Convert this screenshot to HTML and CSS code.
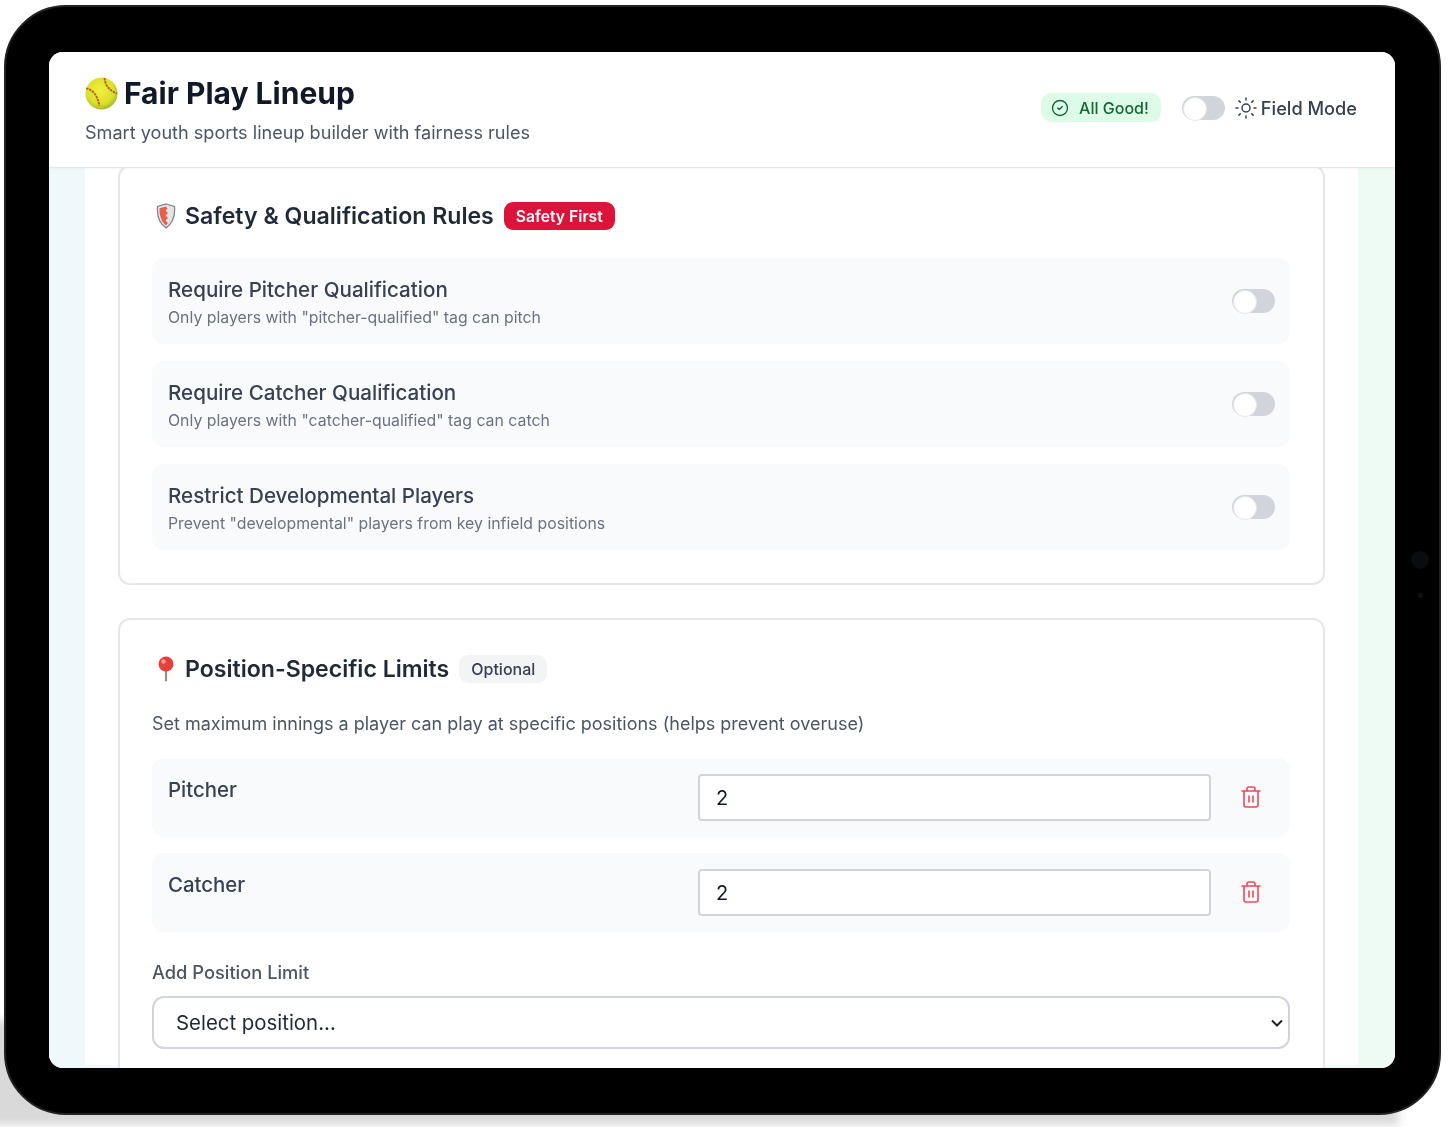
FILE: index.html

```html
<!DOCTYPE html>
<html>
<head>
  <meta charset="UTF-8">
  <title>Fair Play Lineup</title>
  <link rel="stylesheet" href="styles.css">
</head>
<body>
  <div class="ground-shadow"></div>
  <div class="device">
    <div class="camera"></div>
    <div class="sensor"></div>
    <div class="screen">
      <div class="header">
        <div>
          <h1 class="app-title">
            <svg class="ball" viewBox="0 0 32 32">
              <defs>
                <radialGradient id="ballFill" cx="45%" cy="40%" r="62%">
                  <stop offset="0" stop-color="#f2f03c"/>
                  <stop offset="0.7" stop-color="#d9e02a"/>
                  <stop offset="1" stop-color="#9fb52a"/>
                </radialGradient>
              </defs>
              <circle cx="16" cy="16" r="15.5" fill="url(#ballFill)"/>
              <path d="M1 11c6 1 11 6 13 17M19 1c0 6 4 12 12 15" fill="none" stroke="#bb5a2c" stroke-width="1.8" stroke-dasharray="2.4 .8"/>
            </svg>
            Fair Play Lineup
          </h1>
          <p class="app-sub">Smart youth sports lineup builder with fairness rules</p>
        </div>
        <div class="header-right">
          <span class="status">
            <svg class="status-icon" viewBox="0 0 24 24"><circle cx="12" cy="12" r="10"/><path d="m9 12 2 2 4-4"/></svg>
            All Good!
          </span>
          <span class="toggle"></span>
          <span class="field-mode">
            <svg class="sun" viewBox="0 0 24 24"><circle cx="12" cy="12" r="4"/><path d="M12 2v2M12 20v2M4.9 4.900l1.400 1.400M17.700 17.700l1.400 1.400M2 12h2M20 12h2M6.300 17.700l-1.400 1.400M19.100 4.900l-1.400 1.400"/></svg>
            Field Mode
          </span>
        </div>
      </div>

      <div class="page">
        <div class="column">
          <div class="card">
            <div class="card-title">
              <svg class="emoji" viewBox="0 0 20 26">
                <path d="M10 1 18.500 3.500c.8 9-1.500 16.500-8.500 21.500C3 20 .7 12.500 1.500 3.500z" fill="#e3e4e7" stroke="#7e8288" stroke-width="1.200"/>
                <path d="M10 3.500 3.500 5.200C3.200 12 5 18 10 22.500l2-2.500-2.500-2.500 2.500-2.500-2.500-2.500 2.500-2.500-2.500-2.500 2-2z" fill="#e8604a"/>
              </svg>
              <h2>Safety &amp; Qualification Rules</h2>
              <span class="badge badge-red">Safety First</span>
            </div>
            <div class="rule">
              <div>
                <div class="rule-name">Require Pitcher Qualification</div>
                <div class="rule-desc">Only players with "pitcher-qualified" tag can pitch</div>
              </div>
              <span class="toggle"></span>
            </div>
            <div class="rule">
              <div>
                <div class="rule-name">Require Catcher Qualification</div>
                <div class="rule-desc">Only players with "catcher-qualified" tag can catch</div>
              </div>
              <span class="toggle"></span>
            </div>
            <div class="rule">
              <div>
                <div class="rule-name">Restrict Developmental Players</div>
                <div class="rule-desc">Prevent "developmental" players from key infield positions</div>
              </div>
              <span class="toggle"></span>
            </div>
          </div>

          <div class="card card-limits">
            <div class="card-title">
              <svg class="emoji" viewBox="0 0 20 26">
                <path d="M10 13v11.500" stroke="#9a8f84" stroke-width="2.200" stroke-linecap="round"/>
                <circle cx="10" cy="8" r="7.500" fill="#e5403a"/>
                <circle cx="7.500" cy="5.500" r="2.200" fill="#f59a90"/>
              </svg>
              <h2>Position-Specific Limits</h2>
              <span class="badge badge-gray">Optional</span>
            </div>
            <p class="limits-help">Set maximum innings a player can play at specific positions (helps prevent overuse)</p>
            <div class="limit">
              <div class="limit-name">Pitcher</div>
              <input class="limit-input" type="text" value="2">
              <svg class="trash" viewBox="0 0 24 24"><path d="M3 6h18M19 6v14a2 2 0 0 1-2 2H7a2 2 0 0 1-2-2V6M8 6V4a2 2 0 0 1 2-2h4a2 2 0 0 1 2 2v2M10 11v6M14 11v6"/></svg>
            </div>
            <div class="limit">
              <div class="limit-name">Catcher</div>
              <input class="limit-input" type="text" value="2">
              <svg class="trash" viewBox="0 0 24 24"><path d="M3 6h18M19 6v14a2 2 0 0 1-2 2H7a2 2 0 0 1-2-2V6M8 6V4a2 2 0 0 1 2-2h4a2 2 0 0 1 2 2v2M10 11v6M14 11v6"/></svg>
            </div>
            <label class="add-label" for="addLimit">Add Position Limit</label>
            <select class="add-select" id="addLimit">
              <option>Select position...</option>
            </select>
          </div>
        </div>
      </div>
    </div>
  </div>
</body>
</html>
```

FILE: styles.css

```css
* {
    box-sizing: border-box;
}
html, body {
    height: 100%;
}
body {
    margin: 0;
    background: #fff;
    font-family: Inter, "Liberation Sans", sans-serif;
    overflow: hidden;
    position: relative;
}
.ground-shadow {
    position: absolute;
    left: -10px;
    right: 50px;
    bottom: 2px;
    height: 105px;
    background: #d9d9d9;
    filter: blur(4px);
}
.device {
    position: relative;
    width: 1437px;
    height: 1110px;
    margin: 5px 0 0 4px;
    padding: 45px 44px 0 43px;
    background: #000;
    border: 2px solid #222;
    border-radius: 62px;
    filter: blur(0.5px);
}
.camera {
    position: absolute;
    right: 10px;
    top: 544px;
    width: 18px;
    height: 18px;
    border-radius: 50%;
    background: #0b0c10;
}
.sensor {
    position: absolute;
    right: 16px;
    top: 586px;
    width: 5px;
    height: 5px;
    border-radius: 50%;
    background: #111;
}
.screen {
    height: 1016px;
    border-radius: 14px;
    overflow: hidden;
    background: #fff;
    display: flex;
    flex-direction: column;
}

/* header */
.header {
    flex: none;
    height: 116px;
    padding: 0 38px 0 36px;
    display: flex;
    align-items: center;
    justify-content: space-between;
    background: #fff;
    border-bottom: 1px solid #e5e7eb;
    box-shadow: 0 1px 2px rgba(0,0,0,0.04);
    position: relative;
    z-index: 2;
}
.app-title {
    margin: 0;
    display: flex;
    align-items: center;
    gap: 6px;
    font-size: 30px;
    line-height: 36px;
    font-weight: 700;
    color: #111827;
}
.ball {
    width: 33px;
    height: 33px;
}
.app-sub {
    margin: 9px 0 0;
    font-size: 18.100px;
    line-height: 24px;
    color: #4b5563;
}
.header-right {
    display: flex;
    align-items: center;
    margin-bottom: 4px;
}
.status {
    display: flex;
    align-items: center;
    gap: 10px;
    height: 29px;
    padding: 0 12px 0 10px;
    margin-right: 21px;
    border-radius: 10px;
    background: #dcfce7;
    color: #166534;
    font-size: 16px;
    font-weight: 500;
}
.status-icon {
    width: 18px;
    height: 18px;
    fill: none;
    stroke: #166534;
    stroke-width: 1.800;
    stroke-linecap: round;
    stroke-linejoin: round;
}
.toggle {
    flex: none;
    display: block;
    width: 43px;
    height: 24px;
    border-radius: 12px;
    background: #d1d5db;
    position: relative;
}
.toggle::after {
    content: "";
    position: absolute;
    left: 1px;
    top: 1px;
    width: 22px;
    height: 22px;
    border-radius: 50%;
    background: #fff;
    border: 1px solid #e5e7eb;
}
.field-mode {
    display: flex;
    align-items: center;
    gap: 3px;
    margin-left: 9px;
    font-size: 18.200px;
    font-weight: 500;
    color: #374151;
}
.sun {
    width: 24px;
    height: 24px;
    fill: none;
    stroke: #374151;
    stroke-width: 1.500;
    stroke-linecap: round;
}

/* page */
.page {
    flex: 1;
    min-height: 0;
    overflow: hidden;
    padding: 0 37px 0 36px;
    background: linear-gradient(90deg, #eff8fb 0%, #eefbf5 100%);
}
.column {
    height: 100%;
    padding: 0 33px;
    background: #fff;
}
.card {
    margin-top: -3px;
    padding: 32px 33px 33px 32px;
    background: #fff;
    border: 2px solid #e5e7eb;
    border-radius: 12px;
}
.card-limits {
    margin-top: 33px;
}
.card-title {
    display: flex;
    align-items: center;
    height: 34px;
    margin-bottom: 25px;
}
.emoji {
    width: 20px;
    height: 26px;
    margin: 0 9px 0 4px;
}
.card-title h2 {
    margin: 0;
    font-size: 23.100px;
    font-weight: 600;
    color: #1f2937;
}
.badge {
    margin-left: 10px;
    height: 28px;
    padding: 0 12px;
    border-radius: 9px;
    display: flex;
    align-items: center;
    font-size: 16px;
}
.badge-red {
    background: #dc143c;
    color: #fff;
    font-size: 15.700px;
    font-weight: 600;
}
.badge-gray {
    background: #f3f4f6;
    color: #374151;
    font-weight: 500;
}
.rule {
    height: 86px;
    margin-top: 17px;
    padding: 0 15px 0 16px;
    display: flex;
    align-items: center;
    justify-content: space-between;
    background: #f9fafb;
    border-radius: 12px;
}
.rule:first-of-type {
    margin-top: 0;
}
.rule-name {
    font-size: 20.600px;
    line-height: 28px;
    font-weight: 500;
    color: #374151;
    margin-top: 3px;
}
.rule-desc {
    margin-top: 3px;
    font-size: 15.850px;
    line-height: 22px;
    color: #6b7280;
}

/* position limits */
.limits-help {
    margin: 0 0 21px;
    font-size: 18px;
    line-height: 26px;
    color: #4b5563;
}
.limit {
    height: 79px;
    margin-bottom: 16px;
    padding: 16px;
    display: flex;
    align-items: flex-start;
    background: #f9fafb;
    border-radius: 12px;
}
.limit-name {
    width: 530px;
    font-size: 20.400px;
    line-height: 32px;
    font-weight: 500;
    color: #374151;
}
.limit-input {
    width: 513px;
    height: 47px;
    padding: 0 16px;
    border: 2px solid #d1d5db;
    border-radius: 4px;
    background: #fff;
    font-family: inherit;
    font-size: 20px;
    color: #111827;
}
.trash {
    width: 24px;
    height: 24px;
    margin: 11px 0 0 28px;
    fill: none;
    stroke: #f4475a;
    stroke-width: 1.600;
    stroke-linecap: round;
    stroke-linejoin: round;
}
.add-label {
    display: block;
    margin-top: 28px;
    font-size: 18.300px;
    line-height: 24px;
    font-weight: 500;
    color: #4b5563;
}
.add-select {
    display: block;
    width: 100%;
    height: 53px;
    margin-top: 12px;
    padding: 0 18px 0 22px;
    border: 2px solid #d1d5db;
    border-radius: 12px;
    font-family: inherit;
    font-size: 20.400px;
    color: #1f2937;
    appearance: none;
    background: #fff url("data:image/svg+xml,%3Csvg xmlns='http://www.w3.org/2000/svg' viewBox='0 0 12 8'%3E%3Cpath d='M1 1.500l5 5 5-5' fill='none' stroke='%23222' stroke-width='2'/%3E%3C/svg%3E") no-repeat right 5px center / 12px 8px;
}
```
